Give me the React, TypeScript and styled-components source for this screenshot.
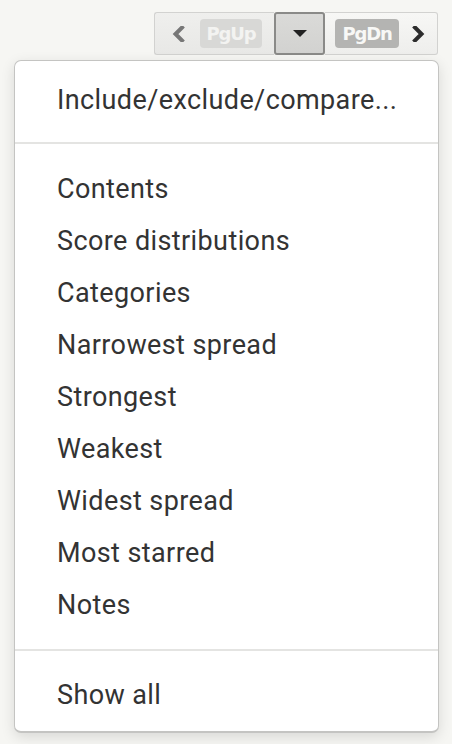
import React from "react";
import styled, { createGlobalStyle } from "styled-components";

const GlobalStyle = createGlobalStyle`
  html, body {
    margin: 0;
    padding: 0;
    background: #f6f6f3;
  }
  body {
    font-family: Roboto, "Noto Sans", "Liberation Sans", sans-serif;
  }
`;

const menuSections: string[][] = [
  ["Include/exclude/compare..."],
  [
    "Contents",
    "Score distributions",
    "Categories",
    "Narrowest spread",
    "Strongest",
    "Weakest",
    "Widest spread",
    "Most starred",
    "Notes",
  ],
  ["Show all"],
];

const App = () => {
  return (
    <Page>
      <GlobalStyle />
      <Pager>
        <PagerHalf side="left">
          <Chevron tone="light" viewBox="0 0 14 16">
            <path d="M10 1.5 L3.5 8 L10 14.5" />
          </Chevron>
          <KeyBadge tone="light">PgUp</KeyBadge>
        </PagerHalf>
        <MenuToggle>
          <svg width="14" height="7" viewBox="0 0 14 7">
            <path d="M0 0 H14 L7 7 Z" fill="#222" />
          </svg>
        </MenuToggle>
        <PagerHalf side="right">
          <KeyBadge tone="dark">PgDn</KeyBadge>
          <Chevron tone="dark" viewBox="0 0 14 16">
            <path d="M4 1.5 L10.5 8 L4 14.5" />
          </Chevron>
        </PagerHalf>
      </Pager>
      <Menu>
        {menuSections.map((items, i) => (
          <MenuSection key={i} place={i === 0 ? "first" : i === menuSections.length - 1 ? "last" : "middle"}>
            {items.map((label) => (
              <MenuItem key={label}>{label}</MenuItem>
            ))}
          </MenuSection>
        ))}
      </Menu>
    </Page>
  );
};

export default App;

const Page = styled.div`
  width: 452px;
  height: 744px;
  box-sizing: border-box;
  padding: 12px 13px 0 14px;
  display: flex;
  flex-direction: column;
  align-items: flex-end;
  gap: 5px;
  overflow: hidden;
`;

const Pager = styled.div`
  display: flex;
  align-items: stretch;
  height: 43px;
  margin-right: 1px;
  box-sizing: border-box;
`;

const PagerHalf = styled.div<{ side: "left" | "right" }>`
  display: flex;
  align-items: center;
  gap: ${({ side }) => (side === "left" ? "14px" : "12px")};
  padding: ${({ side }) => (side === "left" ? "0 12px 0 17px" : "0 12px 0 10px")};
  border: 1px solid #d2d2d0;
  border-${({ side }) => (side === "left" ? "right" : "left")}: none;
  border-radius: ${({ side }) => (side === "left" ? "3px 0 0 3px" : "0 3px 3px 0")};
  background: ${({ side }) =>
    side === "left"
      ? "linear-gradient(#efefed, #e8e8e6)"
      : "linear-gradient(#f7f7f5, #eeeeec)"};
`;

const Chevron = styled.svg<{ tone: "light" | "dark" }>`
  width: 14px;
  height: 16px;
  fill: none;
  stroke: ${({ tone }) => (tone === "light" ? "#777" : "#2c2c2c")};
  stroke-width: 4;
  stroke-linecap: square;
  stroke-linejoin: miter;
`;

const KeyBadge = styled.span<{ tone: "light" | "dark" }>`
  display: inline-flex;
  align-items: center;
  justify-content: center;
  height: 29px;
  width: ${({ tone }) => (tone === "light" ? "62px" : "64px")};
  border-radius: 4px;
  background: ${({ tone }) => (tone === "light" ? "#d8d8d6" : "#b4b4b2")};
  color: ${({ tone }) => (tone === "light" ? "#f3f3f1" : "#f8f8f6")};
  font-family: "DejaVu Sans", "Liberation Sans", sans-serif;
  font-weight: bold;
  font-size: 18px;
  letter-spacing: -1.2px;
`;

const MenuToggle = styled.button`
  width: 51px;
  display: flex;
  align-items: center;
  justify-content: center;
  padding: 0;
  margin: 0;
  border: 2px solid #8a8a88;
  border-radius: 3px;
  background: linear-gradient(#dadad8, #d2d2d0);
  cursor: pointer;
`;

const Menu = styled.div`
  align-self: stretch;
  background: #fff;
  border: 1px solid #c4c4c2;
  border-bottom-width: 2px;
  border-radius: 7px;
  box-shadow: 0 4px 14px rgba(0, 0, 0, 0.12);
  overflow: hidden;
`;

const MenuSection = styled.div<{ place: "first" | "middle" | "last" }>`
  display: flex;
  flex-direction: column;
  padding: ${({ place }) =>
    place === "first" ? "13px 0 16px" : place === "middle" ? "19px 0 18px" : "18px 0 10px"};
  & + & {
    border-top: 2px solid #e4e4e2;
  }
`;

const MenuItem = styled.div`
  height: 52px;
  display: flex;
  align-items: center;
  padding: 0 42px;
  font-size: 27px;
  letter-spacing: 0.4px;
  color: #333;
  cursor: pointer;
  white-space: nowrap;
`;
